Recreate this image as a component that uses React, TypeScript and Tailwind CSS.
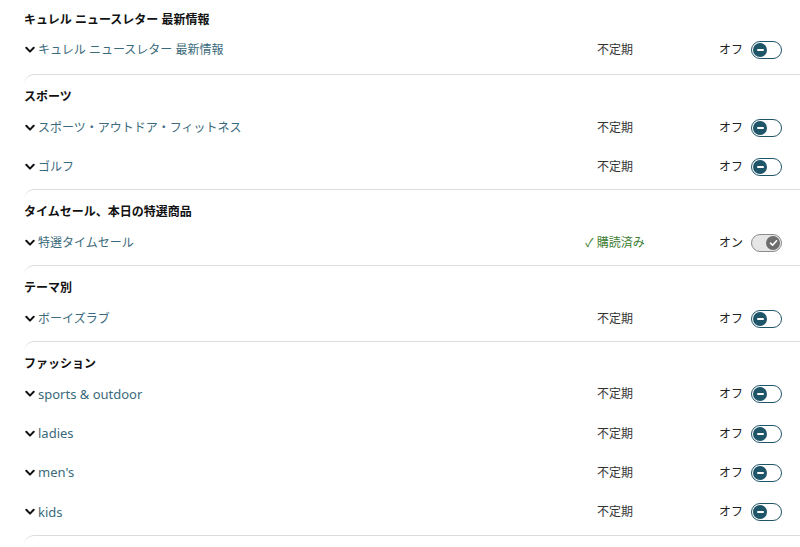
import React from "react";

type Row = { name: string; on?: boolean };
type Section = { title: string; rows: Row[] };

const sections: Section[] = [
  { title: "キュレル ニュースレター 最新情報", rows: [{ name: "キュレル ニュースレター 最新情報" }] },
  { title: "スポーツ", rows: [{ name: "スポーツ・アウトドア・フィットネス" }, { name: "ゴルフ" }] },
  { title: "タイムセール、本日の特選商品", rows: [{ name: "特選タイムセール", on: true }] },
  { title: "テーマ別", rows: [{ name: "ボーイズラブ" }] },
  {
    title: "ファッション",
    rows: [{ name: "sports & outdoor" }, { name: "ladies" }, { name: "men's" }, { name: "kids" }],
  },
];

function Chevron() {
  return (
    <svg width="10" height="8" viewBox="0 0 10 8" className="shrink-0">
      <polyline points="1.3,1.8 5,5.6 8.7,1.8" fill="none" stroke="#111" strokeWidth="2" strokeLinecap="round" strokeLinejoin="round" />
    </svg>
  );
}

function Toggle({ on }: { on?: boolean }) {
  if (on) {
    return (
      <div className="relative w-[31px] h-[18px] rounded-full border border-[#8c8c8c] bg-[#e6e6e6] flex items-center justify-end pr-[1px]">
        <div className="w-[14px] h-[14px] rounded-full bg-[#6e6e6e] flex items-center justify-center">
          <svg width="9" height="8" viewBox="0 0 9 8">
            <polyline points="1.5,4.2 3.6,6.2 7.6,1.8" fill="none" stroke="#fff" strokeWidth="1.6" strokeLinecap="round" strokeLinejoin="round" />
          </svg>
        </div>
      </div>
    );
  }
  return (
    <div className="relative w-[31px] h-[18px] rounded-full border-[1.5px] border-[#1f5569] bg-white flex items-center pl-[1px]">
      <div className="w-[14px] h-[14px] rounded-full bg-[#1f5569] flex items-center justify-center">
        <div className="w-[7px] h-[2px] bg-white rounded-sm" />
      </div>
    </div>
  );
}

const isAscii = (s: string) => /^[\x00-\x7f]+$/.test(s);

export default function App() {
  return (
    <div
      className="w-[800px] h-[547px] overflow-hidden bg-white pl-6"
      style={{ fontFamily: '"Noto Sans", "Noto Sans CJK JP", sans-serif' }}
    >
      <div className="-mt-[2px]">
        {sections.map((s, i) => (
          <div
            key={s.title}
            className={
              i === 0
                ? "pb-[5px]"
                : "pb-[3.5px] border-t border-t-[#dcdcdc] border-l-0 rounded-tl-[10px]"
            }
          >
            <div className="h-[32px] pt-[14px] text-[12px] leading-[16px] font-bold text-[#111]">{s.title}</div>
            {s.rows.map((r) => (
              <div key={r.name} className="h-[39.3px] pt-[1.5px] flex items-center pr-[18px]">
                <div className="flex-1 flex items-center gap-[3px] pl-[1px]">
                  <Chevron />
                  <span
                    className={
                      isAscii(r.name)
                        ? "text-[13px] text-[#3a6a7b] leading-none"
                        : "text-[12px] text-[#3a6a7b] leading-none"
                    }
                  >
                    {r.name}
                  </span>
                </div>
                <div className="w-[100px] text-center text-[12px] leading-none">
                  {r.on ? (
                    <span className="text-[#3c7d31]">✓ 購読済み</span>
                  ) : (
                    <span className="text-[#333]">不定期</span>
                  )}
                </div>
                <div className="ml-[54px] flex items-center gap-2">
                  <span className="text-[12px] text-[#222] w-[24px] leading-none">{r.on ? "オン" : "オフ"}</span>
                  <Toggle on={r.on} />
                </div>
              </div>
            ))}
          </div>
        ))}
        <div className="h-[20px] border-t border-t-[#dcdcdc] border-l-0 rounded-tl-[10px]" />
      </div>
    </div>
  );
}
